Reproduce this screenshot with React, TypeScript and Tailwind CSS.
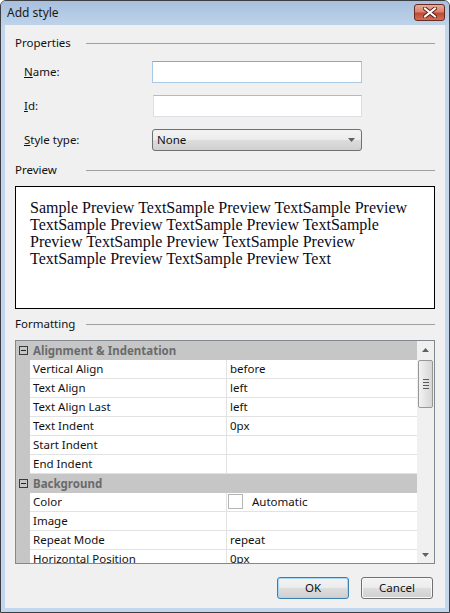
import React from "react";

const ui = "font-['Noto_Sans',sans-serif] text-[11.5px] text-[#111]";

function SectionHeader({ label }: { label: string }) {
  return (
    <div className="flex items-center h-[16px]">
      <div className="w-[71px] leading-[16px]">{label}</div>
      <div className="flex-1 h-0 border-t border-[#a0a0a0]" />
    </div>
  );
}

function MinusBox() {
  return (
    <div className="w-[9px] h-[9px] border border-[#3a3a3a] flex items-center justify-center">
      <div className="w-[5px] h-[1px] bg-[#222]" />
    </div>
  );
}

function Category({ label }: { label: string }) {
  return (
    <div className="flex items-center h-[19px] bg-[#c6c6c6]">
      <div className="ml-[3px]">
        <MinusBox />
      </div>
      <div className="ml-[5px] font-bold text-[#6b6b6b] leading-[19px]">{label}</div>
    </div>
  );
}

function PropRow({ name, value, swatch }: { name: string; value: string; swatch?: boolean }) {
  return (
    <div className="flex h-[19px]">
      <div className="w-[14px] bg-[#c6c6c6]" />
      <div className="w-[197px] bg-white border-b border-r border-[#e2e2e2] pl-[3px] leading-[18px] whitespace-nowrap overflow-hidden">
        {name}
      </div>
      <div className="flex-1 bg-white border-b border-[#e2e2e2] pl-[3px] leading-[18px] whitespace-nowrap overflow-hidden flex items-start">
        {swatch ? (
          <>
            <div className="w-[15px] h-[15px] mt-[1px] -ml-[2px] border border-[#b4b4b4] bg-white" />
            <span className="ml-[9px]">{value}</span>
          </>
        ) : (
          value
        )}
      </div>
    </div>
  );
}

function Tri({ down }: { down?: boolean }) {
  return (
    <svg width="7" height="4" viewBox="0 0 7 4">
      {down ? <polygon points="0,0 7,0 3.5,4" fill="#606060" /> : <polygon points="0,4 7,4 3.5,0" fill="#606060" />}
    </svg>
  );
}

const btnBg =
  "bg-[linear-gradient(to_bottom,#f3f3f3_0%,#ececec_50%,#dddddd_50%,#d0d0d0_100%)]";

export default function App() {
  return (
    <div className={`w-[450px] h-[613px] rounded-t-[6px] border border-[#3b3e43] bg-[#c2d6ed] flex flex-col overflow-hidden ${ui}`}>
      {/* Title bar */}
      <div className="h-[24px] flex items-start justify-between bg-[linear-gradient(to_bottom,#a8c0de,#bed3ea)] pl-[6px] pr-[4px]">
        <div className="leading-[24px] text-[12px] text-[#1a1a1a]">Add style</div>
        <div className="mt-[3px] w-[31px] h-[17px] rounded-[3px] border border-[#6a2a20] bg-[linear-gradient(to_bottom,#e9aa9b_0%,#d98371_45%,#c24a33_55%,#cf6e57_100%)] flex items-center justify-center">
          <svg width="14" height="11" viewBox="0 0 14 11">
            <path d="M2 1.5 L12 9.5 M12 1.5 L2 9.5" stroke="#5b2219" strokeWidth="4" strokeLinecap="square" />
            <path d="M2 1.5 L12 9.5 M12 1.5 L2 9.5" stroke="#ffffff" strokeWidth="2" strokeLinecap="square" />
          </svg>
        </div>
      </div>

      {/* Content */}
      <div className="flex-1 mx-[4px] mb-[4px] bg-[#f0f0f0] px-[10px] flex flex-col">
        <div className="mt-[10px]">
          <SectionHeader label="Properties" />
        </div>

        <div className="mt-[10px] flex items-center h-[22px]">
          <div className="w-[137px] pl-[9px]">
            <span className="underline">N</span>ame:
          </div>
          <div className="w-[210px] h-[22px] bg-white border border-[#a9c8e6] border-t-[#7fa9d6]" />
        </div>

        <div className="mt-[12px] flex items-center h-[22px]">
          <div className="w-[138px] pl-[9px]">
            <span className="underline">I</span>d:
          </div>
          <div className="w-[209px] h-[22px] bg-white border border-[#dcdfe4] border-t-[#b5b8bd]" />
        </div>

        <div className="mt-[12px] flex items-center h-[22px]">
          <div className="w-[137px] pl-[9px]">
            <span className="underline">S</span>tyle type:
          </div>
          <div className={`w-[210px] h-[22px] rounded-[3px] border border-[#707070] ${btnBg} flex items-center justify-between pl-[4px] pr-[6px]`}>
            <span>None</span>
            <Tri down />
          </div>
        </div>

        <div className="mt-[11px]">
          <SectionHeader label="Preview" />
        </div>

        <div className="mt-[8px] h-[123px] border border-black bg-white pl-[14px] pr-[12px] pt-[12px]">
          <div className="font-['Liberation_Serif',serif] text-[16px] leading-[17px] text-[#0a0a1a]">
            Sample Preview TextSample Preview TextSample Preview TextSample Preview TextSample Preview TextSample Preview TextSample Preview TextSample Preview TextSample Preview TextSample Preview Text
          </div>
        </div>

        <div className="mt-[7px]">
          <SectionHeader label="Formatting" />
        </div>

        <div className="mt-[8px] h-[224px] border border-[#828790] flex overflow-hidden">
          <div className="flex-1 flex flex-col overflow-hidden">
            <Category label="Alignment & Indentation" />
            <PropRow name="Vertical Align" value="before" />
            <PropRow name="Text Align" value="left" />
            <PropRow name="Text Align Last" value="left" />
            <PropRow name="Text Indent" value="0px" />
            <PropRow name="Start Indent" value="" />
            <PropRow name="End Indent" value="" />
            <Category label="Background" />
            <PropRow name="Color" value="Automatic" swatch />
            <PropRow name="Image" value="" />
            <PropRow name="Repeat Mode" value="repeat" />
            <PropRow name="Horizontal Position" value="0px" />
          </div>
          <div className="w-[17px] bg-[#f0f0f0] flex flex-col">
            <div className="h-[18px] flex items-center justify-center">
              <Tri />
            </div>
            <div className="mt-[1px] mx-[1px] h-[48px] rounded-[2px] border border-[#979797] bg-[linear-gradient(to_right,#f2f2f2,#e4e4e4_50%,#d6d6d6)] flex flex-col items-center justify-center gap-[2px]">
              <div className="w-[6px] h-[1px] bg-[#5a5a5a]" />
              <div className="w-[6px] h-[1px] bg-[#5a5a5a]" />
              <div className="w-[6px] h-[1px] bg-[#5a5a5a]" />
              <div className="w-[6px] h-[1px] bg-[#5a5a5a]" />
            </div>
            <div className="flex-1" />
            <div className="h-[17px] flex items-center justify-center">
              <Tri down />
            </div>
          </div>
        </div>

        <div className="mt-[13px] flex justify-end gap-[12px] pr-[2px]">
          <div className={`w-[72px] h-[22px] rounded-[3px] border border-[#3c7fb1] ${btnBg} shadow-[inset_0_0_0_1px_#a6d8f5] flex items-center justify-center`}>
            OK
          </div>
          <div className={`w-[72px] h-[22px] rounded-[3px] border border-[#707070] ${btnBg} shadow-[inset_0_0_0_1px_#f8f8f8] flex items-center justify-center`}>
            Cancel
          </div>
        </div>
      </div>
    </div>
  );
}
